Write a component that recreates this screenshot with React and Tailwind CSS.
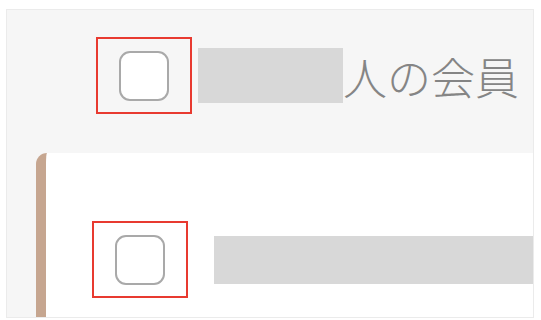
function CheckBox() {
    return (
        <div className="flex h-[77px] w-[96px] shrink-0 items-center justify-center border-2 border-[#e83a30]">
            <div className="h-[50px] w-[50px] rounded-[11px] border-2 border-[#a9a9a9] bg-white" />
        </div>
    );
}

export default function App() {
    return (
        <div className="h-[320px] w-[541px] overflow-hidden bg-white pl-[6px] pt-[9px]" style={{ fontFamily: '"Noto Sans CJK JP", "Noto Sans", sans-serif' }}>
            <div className="h-[309px] w-[528px] overflow-hidden border border-[#ebebeb] bg-[#f6f6f6]">
                <div className="ml-[89px] mt-[27px] flex items-center">
                    <CheckBox />
                    <div className="ml-[6px] h-[55px] w-[145px] bg-[#d8d8d8]" />
                    <span className="text-[44px] font-light leading-none text-[#858585]">人の会員</span>
                </div>
                <div className="ml-[29px] mt-[39px] h-[200px] rounded-tl-[11px] border-l-[10px] border-[#c6a690] bg-white pl-[46px] pt-[68px]">
                    <div className="flex items-center">
                        <CheckBox />
                        <div className="ml-[26px] h-[48px] flex-1 bg-[#d8d8d8]" />
                    </div>
                </div>
            </div>
        </div>
    );
}
